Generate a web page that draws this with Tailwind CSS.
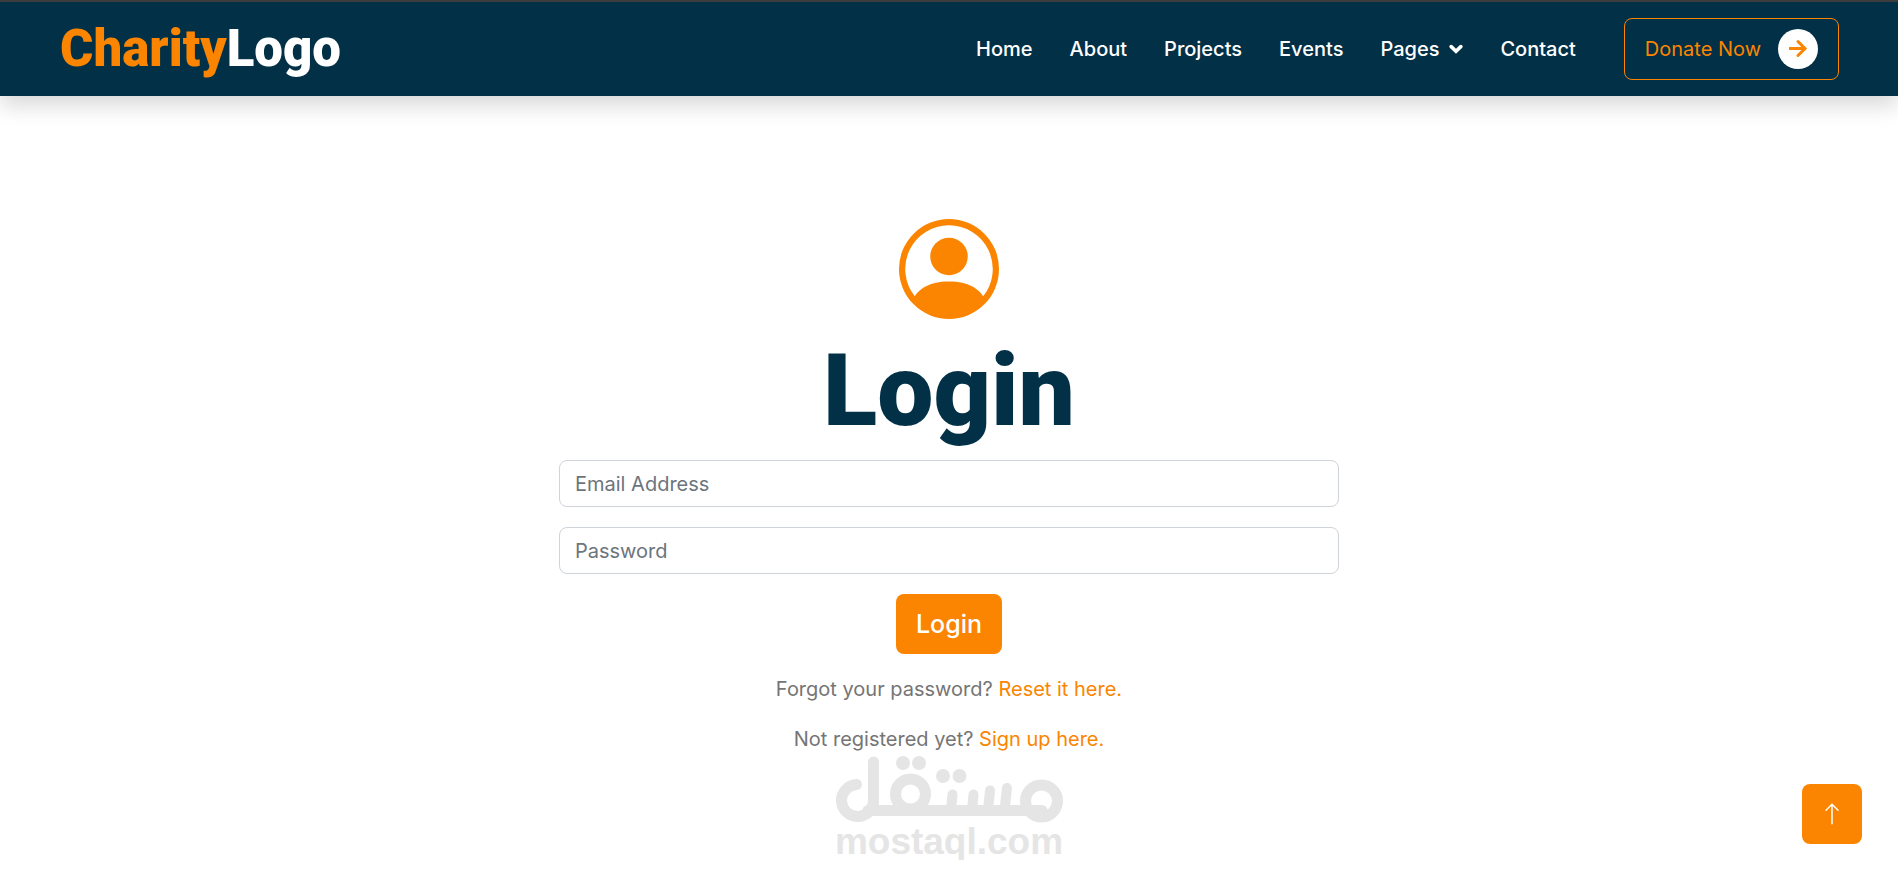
<!DOCTYPE html>
<html lang="en">

<head>
    <meta charset="UTF-8">
    <meta name="viewport" content="width=device-width, initial-scale=1.0">
    <title>Login</title>
    <script src="https://cdn.jsdelivr.net/npm/@tailwindcss/browser@4"></script>
</head>

<body class="bg-white font-['Inter',sans-serif] text-xl leading-[30px] text-[#757575]">
    <header class="flex items-center justify-between border-t-2 border-[#3c3c3c] bg-[#023047] pl-[60px] pr-[59px] py-4 shadow-[0_10px_20px_rgba(0,0,0,0.15)]">
        <a href="#" class="font-['Roboto',sans-serif] text-[51px] leading-[50px] font-black text-white"><span class="text-[#fb8500]">Charity</span>Logo</a>
        <div class="flex items-center gap-12">
            <nav class="flex items-center gap-[37px] font-medium text-white">
                <a href="#">Home</a>
                <a href="#">About</a>
                <a href="#">Projects</a>
                <a href="#">Events</a>
                <a href="#" class="flex items-center gap-2.5">Pages
                    <svg class="h-2.5 w-3.5" viewBox="0 0 14 10" fill="none" stroke="currentColor" stroke-width="3.600" stroke-linecap="round" stroke-linejoin="miter"><path d="M2.200 2.600l4.800 4.600 4.800-4.600" /></svg>
                </a>
                <a href="#">Contact</a>
            </nav>
            <a href="#" class="flex items-center gap-[17px] rounded-lg border border-[#fb8500] px-5 py-2.5 text-[#fb8500]">Donate Now
                <span class="flex size-10 items-center justify-center rounded-full bg-white">
                    <svg class="size-5" viewBox="0 0 20 20" fill="none" stroke="currentColor" stroke-width="3" stroke-linejoin="miter"><path d="M1 9.500h15" /><path d="M10 2.500l7 7-7 7" stroke-linecap="round" /></svg>
                </span>
            </a>
        </div>
    </header>

    <main class="flex flex-col items-center pt-[123px]">
        <svg class="size-[100px] text-[#fb8500]" viewBox="0 0 16 16" fill="currentColor">
            <path d="M11 6a3 3 0 1 1-6 0 3 3 0 0 1 6 0" />
            <path fill-rule="evenodd" d="M0 8a8 8 0 1 1 16 0A8 8 0 0 1 0 8m8-7a7 7 0 0 0-5.468 11.37C3.242 11.226 4.805 10 8 10s4.757 1.225 5.468 2.37A7 7 0 0 0 8 1" />
        </svg>
        <h1 class="mt-3 mb-[9px] font-['Roboto',sans-serif] text-[100px] leading-[120px] font-black text-[#023047]">Login</h1>
        <form id="loginForm" class="flex w-full max-w-[780px] flex-col items-center gap-5">
            <input type="email" id="email" name="email" aria-label="Email Address" placeholder="Email Address" class="h-[47px] w-full rounded-lg border border-[#ced4da] px-[15px] placeholder:text-[#6c757d]">
            <input type="password" id="password" name="password" aria-label="Password" placeholder="Password" class="h-[47px] w-full rounded-lg border border-[#ced4da] px-[15px] placeholder:text-[#6c757d]">
            <button type="submit" class="h-[60px] rounded-lg bg-[#fb8500] px-5 text-[25px] font-medium text-white">Login</button>
        </form>
        <p class="mt-5">Forgot your password? <a href="#" class="text-[#fb8500]">Reset it here.</a></p>
        <p class="mt-5">Not registered yet? <a href="#" class="text-[#fb8500]">Sign up here.</a></p>

        <div class="flex flex-col items-center text-[#e5e5e5]">
            <!-- logo mark -->
            <svg class="h-[70px] w-[228px]" viewBox="0 0 228 70" role="img" aria-label="مستقل" fill="none" stroke="currentColor" stroke-width="11" stroke-linecap="round">
                <path d="M21.500 30.500A16 16 0 1 0 38.500 46V8" />
                <path d="M33 56.500H207" />
                <circle cx="75.500" cy="40" r="15" />
                <circle cx="206.500" cy="47" r="16" />
                <path d="M116 56l1.500-15.500M137 56l1.500-15.500M153 56l2-19.500M169.500 56l2.500-22" stroke-width="10" />
                <g fill="currentColor" stroke="none">
                    <circle cx="68" cy="9" r="7" />
                    <circle cx="84" cy="9" r="7" />
                    <circle cx="108" cy="22" r="7" />
                    <circle cx="124.500" cy="22" r="7" />
                </g>
            </svg>
            <span class="font-['Liberation_Sans',sans-serif] text-[37px] leading-9 font-bold">mostaql.com</span>
        </div>
    </main>

    <button type="button" aria-label="Back to top" class="fixed right-9 bottom-[35px] flex size-[60px] items-center justify-center rounded-lg bg-[#fb8500] text-white">
        <svg class="size-6" viewBox="0 0 16 16" fill="currentColor"><path fill-rule="evenodd" d="M8 15a.5.5 0 0 0 .5-.5V2.707l3.146 3.147a.5.5 0 0 0 .708-.708l-4-4a.5.5 0 0 0-.708 0l-4 4a.5.5 0 1 0 .708.708L7.500 2.707V14.500a.5.5 0 0 0 .5.5" /></svg>
    </button>
</body>

</html>
